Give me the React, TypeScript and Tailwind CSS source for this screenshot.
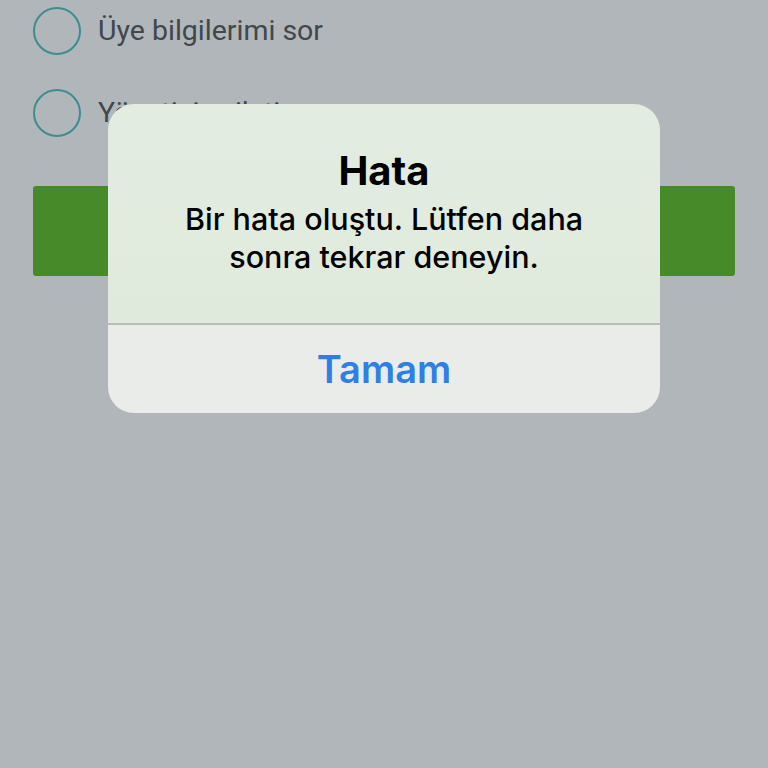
import React from "react";

export default function App() {
  return (
    <div className="relative w-[768px] h-[768px] overflow-hidden bg-[#b1b6ba]" style={{ fontFamily: "Roboto, 'Liberation Sans', sans-serif" }}>
      <div className="flex flex-col px-[33px] pt-[7px]">
        <div className="flex items-center gap-[17px] h-[48px]">
          <div className="w-[48px] h-[48px] rounded-full border-[2.5px] border-[#3f8c8f]" />
          <span className="text-[28.5px] text-[#41474b]">Üye bilgilerimi sor</span>
        </div>
        <div className="flex items-center gap-[17px] h-[48px] mt-[34px]">
          <div className="w-[48px] h-[48px] rounded-full border-[2.5px] border-[#3f8c8f]" />
          <span className="text-[28.5px] text-[#41474b]">Yöneticiye iletin</span>
        </div>
        <div className="mt-[49px] h-[90px] rounded-[3px] bg-[#478a29]" />
      </div>

      <div
        className="absolute left-[108px] top-[104px] w-[552px] h-[309px] rounded-[26px] overflow-hidden flex flex-col"
        style={{ fontFamily: "Inter, 'Noto Sans', sans-serif" }}
      >
        <div className="h-[219px] bg-gradient-to-b from-[#e3ece1] to-[#e0eadc] flex flex-col items-center pt-[43px]">
          <div className="text-[40px] font-bold text-black leading-[48px]">Hata</div>
          <div className="text-[30.5px] font-medium text-black text-center leading-[38px] mt-[5px] whitespace-nowrap">
            Bir hata oluştu. Lütfen daha<br />sonra tekrar deneyin.
          </div>
        </div>
        <div className="h-[2px] bg-[#b9bdb9]" />
        <div className="flex-1 bg-[#eaecea] flex items-center justify-center">
          <span className="text-[38px] font-semibold text-[#2f80e6] leading-[46px]">Tamam</span>
        </div>
      </div>
    </div>
  );
}
